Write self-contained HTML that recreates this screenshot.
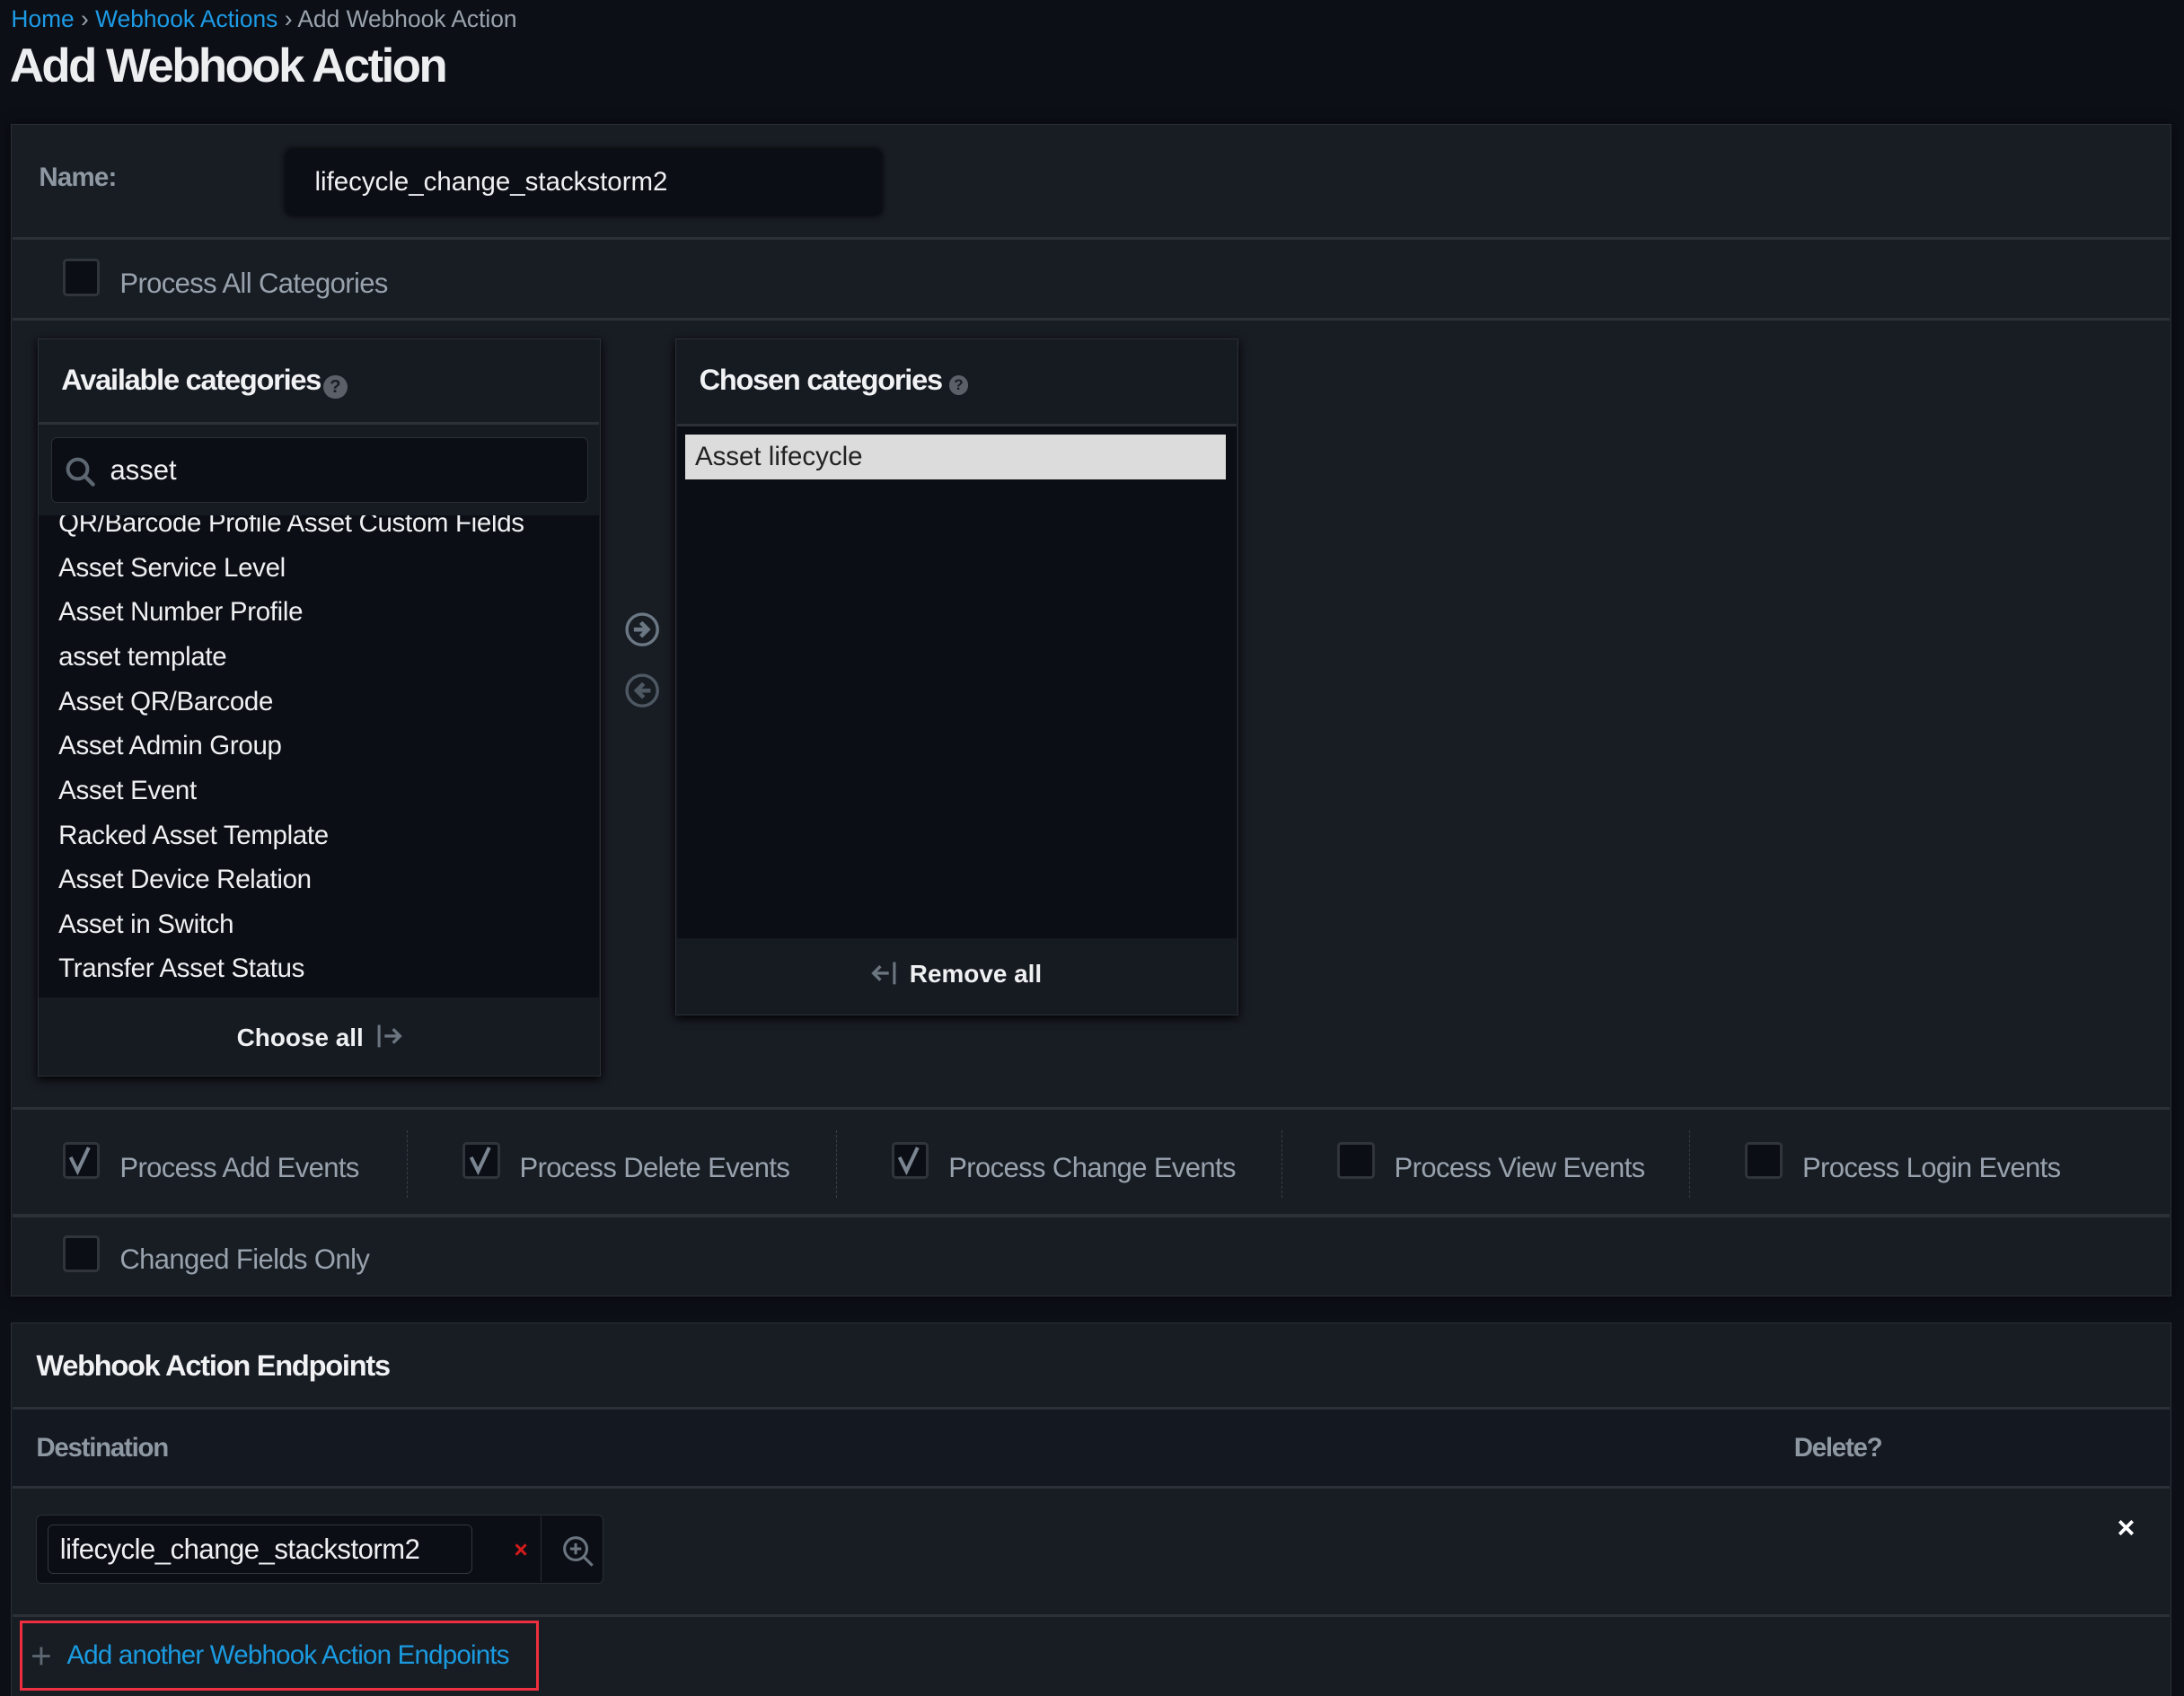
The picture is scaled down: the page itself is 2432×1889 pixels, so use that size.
<!DOCTYPE html>
<html><head><meta charset="utf-8"><style>
html,body{margin:0;padding:0;background:#0c0f16;overflow:hidden}
#c{position:relative;width:1568px;height:1218px;zoom:1.551;font-family:"Liberation Sans",sans-serif;color:#e8eaed}
.a{position:absolute}
.h{font-weight:bold;letter-spacing:-0.8px}
.panel{background:#181c23;border:1px solid #2b2f36}
.line{position:absolute;height:2px;background:#2c3037}
.cb{position:absolute;width:23px;height:23px;background:#0b0e14;border:2px solid #30343b;border-radius:3px}
.lbl{position:absolute;font-size:20px;color:#98a2ad;letter-spacing:-0.4px}
.item{position:absolute;left:14px;font-size:19px;color:#eef0f2;letter-spacing:-0.2px}
.dash{position:absolute;width:0;border-left:1px dashed #3a3f47;height:48px;top:812px}
</style></head><body><div id="c">
<div class="a" style="left:8px;top:4px;font-size:17px;color:#9aa3ad"><span style="color:#1c9be6">Home</span> › <span style="color:#1c9be6">Webhook Actions</span> › Add Webhook Action</div>
<div class="a h" style="left:7px;top:28px;font-size:34px;color:#eceef0;letter-spacing:-1.6px">Add Webhook Action</div>

<div class="a panel" style="left:8px;top:89px;width:1550px;height:841px;box-shadow:0 0 8px rgba(0,0,0,.6)"></div>
<div class="a" style="left:28px;top:117px;font-size:19px;font-weight:bold;color:#8e98a3;letter-spacing:-0.5px">Name:</div>
<div class="a" style="left:205px;top:107px;width:428px;height:48px;background:#0b0e14;border-radius:5px;box-shadow:0 0 4px #000"></div>
<div class="a" style="left:226px;top:120px;font-size:19px;color:#eef0f2">lifecycle_change_stackstorm2</div>
<div class="line" style="left:9px;top:170px;width:1549px"></div>
<div class="cb" style="left:45px;top:186px"></div>
<div class="lbl" style="left:86px;top:192px">Process All Categories</div>
<div class="line" style="left:9px;top:228px;width:1549px"></div>

<div class="a panel" style="left:27px;top:243px;width:403px;height:529px;background:#161a21;box-shadow:0 2px 6px #000"></div>
<div class="a h" style="left:44px;top:261px;font-size:21px;color:#f0f2f4">Available categories<span style="display:inline-block;width:17px;height:17px;border-radius:50%;background:#5b6068;color:#181c23;font-size:13px;text-align:center;line-height:17px;vertical-align:-2px;margin-left:2px;letter-spacing:0">?</span></div>
<div class="line" style="left:28px;top:303px;width:402px"></div>
<div class="a" style="left:37px;top:314px;width:384px;height:46px;background:#0b0e14;border:1px solid #2a2e35;border-radius:4px"></div>
<svg class="a" style="left:46px;top:327px" width="24" height="24" viewBox="0 0 24 24"><circle cx="10" cy="10" r="7" fill="none" stroke="#5d6772" stroke-width="2.6"/><path d="M15 15l6 6" stroke="#5d6772" stroke-width="2.8" stroke-linecap="round"/></svg>
<div class="a" style="left:79px;top:326px;font-size:20px;color:#eef0f2">asset</div>
<div class="a" style="left:28px;top:370px;width:402px;height:346px;background:#0b0e14;overflow:hidden">
<div class="item" style="top:-5px">QR/Barcode Profile Asset Custom Fields</div>
<div class="item" style="top:27px">Asset Service Level</div>
<div class="item" style="top:59px">Asset Number Profile</div>
<div class="item" style="top:91px">asset template</div>
<div class="item" style="top:123px">Asset QR/Barcode</div>
<div class="item" style="top:155px">Asset Admin Group</div>
<div class="item" style="top:187px">Asset Event</div>
<div class="item" style="top:219px">Racked Asset Template</div>
<div class="item" style="top:251px">Asset Device Relation</div>
<div class="item" style="top:283px">Asset in Switch</div>
<div class="item" style="top:315px">Transfer Asset Status</div>
</div>
<div class="a h" style="left:170px;top:735px;font-size:18px;color:#eef0f2;letter-spacing:0">Choose all</div>
<svg class="a" style="left:270px;top:735px" width="20" height="18" viewBox="0 0 20 18"><path d="M2 1v16" stroke="#6b7580" stroke-width="2"/><path d="M6 9h10M12 4l5 5-5 5" fill="none" stroke="#6b7580" stroke-width="2.2"/></svg>

<svg class="a" style="left:448px;top:439px" width="26" height="26" viewBox="0 0 26 26"><circle cx="13" cy="13" r="11" fill="none" stroke="#6b7884" stroke-width="2.2"/><path d="M7 13h8M12 8l5 5-5 5" fill="none" stroke="#6b7884" stroke-width="3"/></svg>
<svg class="a" style="left:448px;top:483px" width="26" height="26" viewBox="0 0 26 26"><circle cx="13" cy="13" r="11" fill="none" stroke="#4e5863" stroke-width="2.2"/><path d="M19 13h-8M14 8l-5 5 5 5" fill="none" stroke="#4e5863" stroke-width="3"/></svg>

<div class="a panel" style="left:485px;top:243px;width:403px;height:485px;background:#161a21;box-shadow:0 2px 6px #000"></div>
<div class="a h" style="left:502px;top:261px;font-size:21px;color:#f0f2f4">Chosen categories <span style="display:inline-block;width:14px;height:14px;border-radius:50%;background:#5b6068;color:#181c23;font-size:11px;text-align:center;line-height:14px;vertical-align:0;letter-spacing:0">?</span></div>
<div class="a" style="left:486px;top:304px;width:402px;height:368px;background:#0b0e14;border-top:2px solid #2c3037"></div>
<div class="a" style="left:492px;top:312px;width:388px;height:32px;background:#dcdcdc"></div>
<div class="a" style="left:499px;top:317px;font-size:19px;color:#222">Asset lifecycle</div>
<svg class="a" style="left:624px;top:690px" width="20" height="18" viewBox="0 0 20 18"><path d="M18 1v16" stroke="#6b7580" stroke-width="2"/><path d="M14 9H4M8 4L3 9l5 5" fill="none" stroke="#6b7580" stroke-width="2.2"/></svg>
<div class="a h" style="left:653px;top:689px;font-size:18px;color:#eef0f2;letter-spacing:0">Remove all</div>

<div class="line" style="left:9px;top:795px;width:1549px"></div>
<div class="cb" style="left:45px;top:820px"></div><svg class="a" style="left:48px;top:822px" width="20" height="22"><path d="M3 9l5 10 8-17" fill="none" stroke="#7a8591" stroke-width="2.6"/></svg>
<div class="lbl" style="left:86px;top:827px">Process Add Events</div>
<div class="dash" style="left:292px"></div>
<div class="cb" style="left:332px;top:820px"></div><svg class="a" style="left:335px;top:822px" width="20" height="22"><path d="M3 9l5 10 8-17" fill="none" stroke="#7a8591" stroke-width="2.6"/></svg>
<div class="lbl" style="left:373px;top:827px">Process Delete Events</div>
<div class="dash" style="left:600px"></div>
<div class="cb" style="left:640px;top:820px"></div><svg class="a" style="left:643px;top:822px" width="20" height="22"><path d="M3 9l5 10 8-17" fill="none" stroke="#7a8591" stroke-width="2.6"/></svg>
<div class="lbl" style="left:681px;top:827px">Process Change Events</div>
<div class="dash" style="left:920px"></div>
<div class="cb" style="left:960px;top:820px"></div>
<div class="lbl" style="left:1001px;top:827px">Process View Events</div>
<div class="dash" style="left:1213px"></div>
<div class="cb" style="left:1253px;top:820px"></div>
<div class="lbl" style="left:1294px;top:827px">Process Login Events</div>
<div class="line" style="left:9px;top:872px;width:1549px"></div>
<div class="cb" style="left:45px;top:887px"></div>
<div class="lbl" style="left:86px;top:893px">Changed Fields Only</div>

<div class="a panel" style="left:8px;top:950px;width:1550px;height:270px"></div>
<div class="a h" style="left:26px;top:969px;font-size:21px;color:#f0f2f4">Webhook Action Endpoints</div>
<div class="line" style="left:9px;top:1010px;width:1549px"></div>
<div class="a" style="left:9px;top:1012px;width:1549px;height:55px;background:#141820"></div>
<div class="a h" style="left:26px;top:1029px;font-size:19px;color:#8e98a3">Destination</div>
<div class="a h" style="left:1288px;top:1029px;font-size:19px;color:#8e98a3">Delete?</div>
<div class="line" style="left:9px;top:1067px;width:1549px"></div>
<div class="a" style="left:26px;top:1088px;width:406px;height:48px;background:#0b0e14;border:1px solid #2a2e35;border-radius:4px"></div>
<div class="a" style="left:34px;top:1095px;width:304px;height:34px;border:1px solid #33373e;border-radius:4px"></div>
<div class="a" style="left:43px;top:1101px;font-size:20px;color:#eef0f2;letter-spacing:-0.3px">lifecycle_change_stackstorm2</div>
<div class="a" style="left:369px;top:1103px;font-size:17px;color:#d41b1b;font-weight:bold">×</div>
<div class="a" style="left:388px;top:1089px;width:1px;height:47px;background:#2a2e35"></div>
<svg class="a" style="left:402px;top:1101px" width="26" height="26" viewBox="0 0 26 26"><circle cx="11" cy="11" r="8" fill="none" stroke="#6b7580" stroke-width="2"/><path d="M11 7v8M7 11h8M17 17l6 6" stroke="#6b7580" stroke-width="2"/></svg>
<div class="a" style="left:1520px;top:1085px;font-size:22px;color:#fff;font-weight:bold">×</div>
<div class="line" style="left:9px;top:1159px;width:1549px"></div>
<div class="a" style="left:14px;top:1164px;width:369px;height:46px;border:2.5px solid #ee2f3f"></div>
<div class="a" style="left:22px;top:1174px;font-size:26px;color:#5d6772">+</div>
<div class="a" style="left:48px;top:1178px;font-size:19px;color:#1a9be0;letter-spacing:-0.5px">Add another Webhook Action Endpoints</div>
</div></body></html>
